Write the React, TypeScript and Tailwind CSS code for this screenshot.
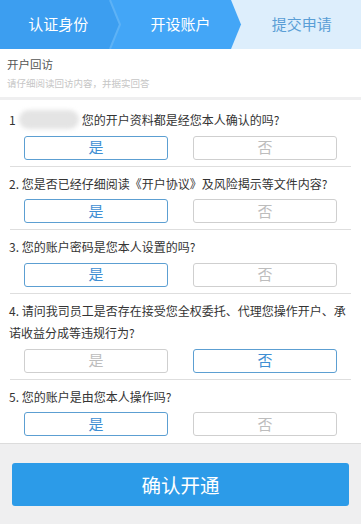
const FONT = { fontFamily: '"Noto Sans CJK SC", "Noto Sans", sans-serif' }

type Question = {
  id: number
  text: React.ReactNode
  answer: "yes" | "no"
}

const QUESTIONS: Question[] = [
  {
    id: 1,
    text: (
      <>
        1
        <span className="mx-[3px] inline-block h-[19px] w-[60px] translate-y-[4px] rounded-full bg-[#e4e4e4] blur-[2px]" />
        您的开户资料都是经您本人确认的吗?
      </>
    ),
    answer: "yes",
  },
  { id: 2, text: "2. 您是否已经仔细阅读《开户协议》及风险揭示等文件内容?", answer: "yes" },
  { id: 3, text: "3. 您的账户密码是您本人设置的吗?", answer: "yes" },
  {
    id: 4,
    text: "4. 请问我司员工是否存在接受您全权委托、代理您操作开户、承诺收益分成等违规行为?",
    answer: "no",
  },
  { id: 5, text: "5. 您的账户是由您本人操作吗?", answer: "yes" },
]

function Steps() {
  return (
    <div className="relative h-[49px]">
      <svg className="absolute inset-0 h-full w-full" viewBox="0 0 361 49" preserveAspectRatio="none">
        <rect width="361" height="49" fill="#ddeefc" />
        <polygon points="0,0 231,0 241,24.5 231,49 0,49" fill="#43a6f7" />
        <polygon points="0,0 110,0 120,24.5 110,49 0,49" fill="#3c9ef0" />
        <polyline points="110,0 120,24.5 110,49" fill="none" stroke="#5db2f6" strokeWidth="2" />
      </svg>
      <div className="relative grid h-full grid-cols-3 items-center text-center text-[15px]">
        <span className="pr-[4px] text-white">认证身份</span>
        <span className="text-white">开设账户</span>
        <span className="pl-[2px] text-[#5a9ed6]">提交申请</span>
      </div>
    </div>
  )
}

function Choice({ label, active }: { label: string; active: boolean }) {
  return (
    <div
      className={
        active
          ? "flex h-[24px] w-[144px] items-center justify-center rounded-[3px] border border-[#5c9fd2] text-[15px] text-[#3f8fd3]"
          : "flex h-[24px] w-[144px] items-center justify-center rounded-[3px] border border-[#cfcfcf] text-[15px] text-[#bdbdbd]"
      }
    >
      {label}
    </div>
  )
}

export default function App() {
  return (
    <div className="flex min-h-[524px] w-[361px] flex-col bg-[#efeff0]" style={FONT}>
      <Steps />

      <div className="bg-white px-[7px] pb-[7px] pt-[6px]">
        <div className="text-[11.5px] leading-[18px] text-[#555]">开户回访</div>
        <div className="mt-[3px] text-[9.5px] leading-[14px] text-[#c6c6c6]">请仔细阅读回访内容，并据实回答</div>
      </div>

      <div className="mt-[3px] bg-white px-[10px]">
        {QUESTIONS.map((q, i) => (
          <div
            key={q.id}
            className={
              i < QUESTIONS.length - 1
                ? "border-b border-[#dedede] pb-[6px] pt-[6px]"
                : "pb-[7px] pt-[6px]"
            }
          >
            <div className="-mx-[1px] text-[12px] leading-[22.5px] text-[#333]">{q.text}</div>
            <div className="mt-[4px] flex justify-between px-[14px]">
              <Choice label="是" active={q.answer === "yes"} />
              <Choice label="否" active={q.answer === "no"} />
            </div>
          </div>
        ))}
      </div>

      <div className="border-t border-[#dcdcdc] px-[12px] pt-[19px]">
        <button className="flex h-[43px] w-full items-center justify-center rounded-[3px] bg-[#2c9be8] text-[19.5px] text-white">
          确认开通
        </button>
      </div>
    </div>
  )
}
